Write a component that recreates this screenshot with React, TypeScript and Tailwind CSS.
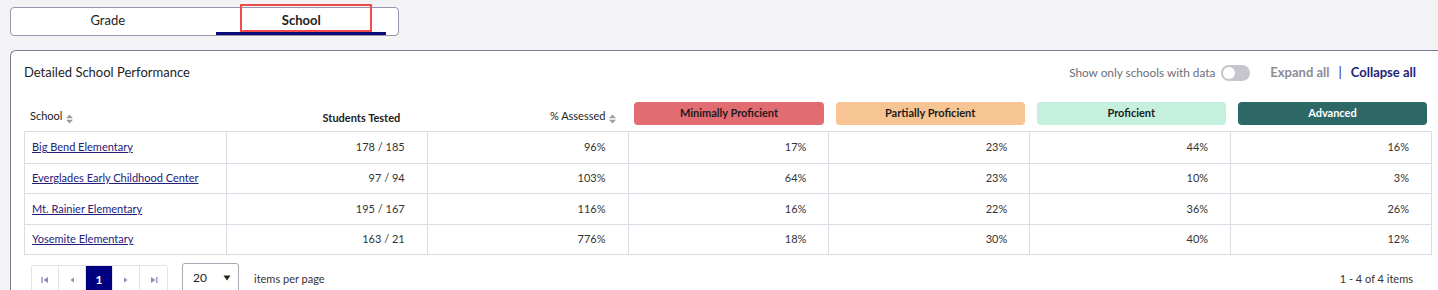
import { ReactNode } from "react";

const rows = [
  { name: "Big Bend Elementary", tested: "178 / 185", assessed: "96%", vals: ["17%", "23%", "44%", "16%"] },
  { name: "Everglades Early Childhood Center", tested: "97 / 94", assessed: "103%", vals: ["64%", "23%", "10%", "3%"] },
  { name: "Mt. Rainier Elementary", tested: "195 / 167", assessed: "116%", vals: ["16%", "22%", "36%", "26%"] },
  { name: "Yosemite Elementary", tested: "163 / 21", assessed: "776%", vals: ["18%", "30%", "40%", "12%"] },
];

const levels = [
  { label: "Minimally Proficient", cls: "bg-[#e36c72] text-[#1c1c1c]" },
  { label: "Partially Proficient", cls: "bg-[#f7c593] text-[#1c1c1c]" },
  { label: "Proficient", cls: "bg-[#c5f0dd] text-[#1c1c1c]" },
  { label: "Advanced", cls: "bg-[#2d6766] text-white" },
];

function SortIcon() {
  return (
    <svg width="7" height="10" viewBox="0 0 7 10" className="ml-[4px] shrink-0">
      <path d="M0 4.2 L3.5 0.5 L7 4.2 Z" fill="#9b9aa6" />
      <path d="M0 5.8 L3.5 9.5 L7 5.8 Z" fill="#9b9aa6" />
    </svg>
  );
}

function PageBtn({ children, active }: { children: ReactNode; active?: boolean }) {
  return (
    <div
      className={
        "flex h-[28px] w-[27px] items-center justify-center border-r border-[#e2e1e8] last:border-r-0 " +
        (active ? "bg-[#000080] text-white" : "bg-white")
      }
    >
      {children}
    </div>
  );
}

export default function App() {
  return (
    <div className="h-[290px] w-[1438px] overflow-hidden bg-[#f3f3f6] pt-[7px] font-['Lato','Liberation_Sans',sans-serif] text-[#222]">
      {/* Grade / School toggle */}
      <div className="relative ml-[10px] flex h-[29px] w-[389px] rounded-[4px] border border-[#9896aa] bg-white">
        <div className="flex flex-1 items-center justify-center pb-[2px] text-[13px]">Grade</div>
        <div className="relative flex flex-1 items-center justify-center pb-[2px] text-[13px] font-bold">
          School
          <div className="absolute bottom-0 left-[11px] right-[12px] h-[3px] bg-[#0c0c78]" />
        </div>
        <div className="pointer-events-none absolute left-[229px] top-[-4px] h-[28px] w-[132px] border-2 border-[#f04a4c]" />
      </div>

      {/* Panel */}
      <div className="ml-[10px] mt-[14px] w-[1440px] rounded-tl-[6px] border-l border-t border-[#7d7995] bg-white pl-[13px] pt-[11px]">
        <div className="flex h-[22px] w-[1409px] items-center">
          <div className="text-[13px] text-[#1e1e1e]">Detailed School Performance</div>
          <div className="ml-auto flex items-center">
            <span className="text-[11.8px] text-[#6e6e78]">Show only schools with data</span>
            <div className="ml-[6px] flex h-[16px] w-[29px] items-center rounded-full bg-[#c6c6ce] px-[2px]">
              <div className="h-[12px] w-[12px] rounded-full bg-white" />
            </div>
            <span className="ml-[20px] text-[13px] font-bold text-[#8c8b96]">Expand all</span>
            <span className="mx-[9px] text-[13px] text-[#24247c]">|</span>
            <span className="mr-[17px] text-[13px] font-bold text-[#22227a]">Collapse all</span>
          </div>
        </div>

        {/* header row */}
        <div className="mt-[11px] grid h-[36px] w-[1408px] grid-cols-7 text-[11px] font-bold">
          <div className="flex items-end pb-[7px] pl-[6px] font-normal">
            School
            <SortIcon />
          </div>
          <div className="flex items-end justify-end pb-[5px] pr-[26px]">Students Tested</div>
          <div className="flex items-end justify-end pb-[7px] pr-[11px] font-normal">
            % Assessed
            <SortIcon />
          </div>
          {levels.map((l) => (
            <div key={l.label} className="pl-[7px] pr-[5px] pt-[7px]">
              <div className={"flex h-[23px] items-center justify-center rounded-[4px] text-[11px] " + l.cls}>{l.label}</div>
            </div>
          ))}
        </div>

        {/* body */}
        <div className="w-[1408px] border border-[#dddce4] text-[11px] text-[#333]">
          {rows.map((r, i) => (
            <div
              key={r.name}
              className={"grid h-[30.5px] grid-cols-7 " + (i > 0 ? "border-t border-[#dddce4]" : "")}
            >
              <div className="flex items-center pl-[7px]">
                <a href="#" className="text-[#24207a] underline">{r.name}</a>
              </div>
              <div className="flex items-center justify-end border-l border-[#dddce4] pr-[22px]">{r.tested}</div>
              <div className="flex items-center justify-end border-l border-[#dddce4] pr-[22px]">{r.assessed}</div>
              {r.vals.map((v, j) => (
                <div key={j} className="flex items-center justify-end border-l border-[#dddce4] pr-[22px]">{v}</div>
              ))}
            </div>
          ))}
        </div>

        {/* pagination */}
        <div className="mt-[8px] flex w-[1408px] items-start pl-[7px] text-[11px]">
          <div className="mt-[2px] flex overflow-hidden rounded-[3px] border border-[#e2e1e8]">
            <PageBtn>
              <svg width="8" height="8" viewBox="0 0 8 8">
                <rect x="0.5" y="1" width="1.3" height="6" fill="#8c8cb8" />
                <path d="M7 1 L2.5 4 L7 7 Z" fill="#8c8cb8" />
              </svg>
            </PageBtn>
            <PageBtn>
              <svg width="6" height="8" viewBox="0 0 6 8">
                <path d="M5 1.5 L1.5 4 L5 6.5 Z" fill="#8c8cb8" />
              </svg>
            </PageBtn>
            <PageBtn active>
              <span className="w-[28px] text-center text-[12px] font-bold">1</span>
            </PageBtn>
            <PageBtn>
              <svg width="6" height="8" viewBox="0 0 6 8">
                <path d="M1 1.5 L4.5 4 L1 6.5 Z" fill="#8c8cb8" />
              </svg>
            </PageBtn>
            <PageBtn>
              <svg width="8" height="8" viewBox="0 0 8 8">
                <path d="M1 1 L5.5 4 L1 7 Z" fill="#8c8cb8" />
                <rect x="6.2" y="1" width="1.3" height="6" fill="#8c8cb8" />
              </svg>
            </PageBtn>
          </div>
          <div className="ml-[14px] flex h-[30px] w-[57px] items-center rounded-[3px] border border-[#a9a8b4] bg-white pl-[10px] pr-[7px] text-[12px] text-[#222]">
            20
            <svg width="8" height="6" viewBox="0 0 8 6" className="ml-auto">
              <path d="M0.5 0.5 L7.5 0.5 L4 5.5 Z" fill="#222" />
            </svg>
          </div>
          <span className="ml-[15px] mt-[8px] text-[11px] text-[#333]">items per page</span>
          <span className="ml-auto mr-[19px] mt-[8px] text-[11px] text-[#333]">1 - 4 of 4 items</span>
        </div>
      </div>
    </div>
  );
}
